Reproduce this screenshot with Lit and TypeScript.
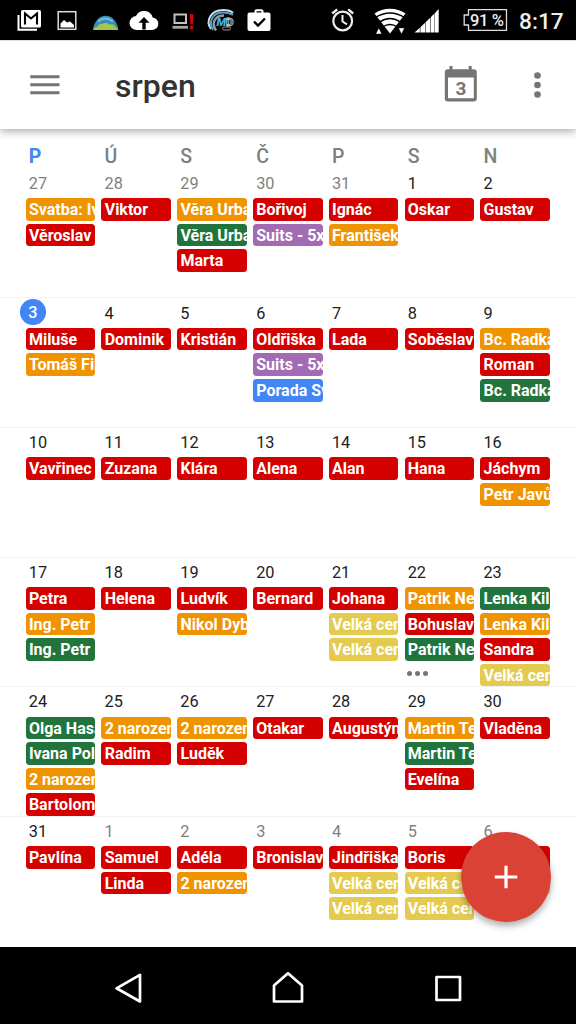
import { LitElement, html, svg, css } from "lit";
import { customElement, property } from "lit/decorators.js";
import { classMap } from "lit/directives/class-map.js";

type Tone = "r" | "o" | "g" | "p" | "b" | "y";
interface Day { n: number; out?: boolean; today?: boolean; more?: boolean; ev: [Tone, string][]; }

const d = (n: number, ...ev: [Tone, string][]): Day => ({ n, ev });
const out = (n: number, ...ev: [Tone, string][]): Day => ({ n, out: true, ev });

const WEEKS: Day[][] = [
  [
    out(27, ["o", "Svatba: Iv"], ["r", "Věroslav"]),
    out(28, ["r", "Viktor"]),
    out(29, ["o", "Věra Urba"], ["g", "Věra Urba"], ["r", "Marta"]),
    out(30, ["r", "Bořivoj"], ["p", "Suits - 5x"]),
    out(31, ["r", "Ignác"], ["o", "František"]),
    d(1, ["r", "Oskar"]),
    d(2, ["r", "Gustav"]),
  ],
  [
    { n: 3, today: true, ev: [["r", "Miluše"], ["o", "Tomáš Fil"]] },
    d(4, ["r", "Dominik"]),
    d(5, ["r", "Kristián"]),
    d(6, ["r", "Oldřiška"], ["p", "Suits - 5x"], ["b", "Porada Sv"]),
    d(7, ["r", "Lada"]),
    d(8, ["r", "Soběslav"]),
    d(9, ["o", "Bc. Radka"], ["r", "Roman"], ["g", "Bc. Radka"]),
  ],
  [
    d(10, ["r", "Vavřinec"]),
    d(11, ["r", "Zuzana"]),
    d(12, ["r", "Klára"]),
    d(13, ["r", "Alena"]),
    d(14, ["r", "Alan"]),
    d(15, ["r", "Hana"]),
    d(16, ["r", "Jáchym"], ["o", "Petr Javů"]),
  ],
  [
    d(17, ["r", "Petra"], ["o", "Ing. Petr"], ["g", "Ing. Petr"]),
    d(18, ["r", "Helena"]),
    d(19, ["r", "Ludvík"], ["o", "Nikol Dyb"]),
    d(20, ["r", "Bernard"]),
    d(21, ["r", "Johana"], ["y", "Velká cen"], ["y", "Velká cen"]),
    { n: 22, more: true, ev: [["o", "Patrik Ne"], ["r", "Bohuslav"], ["g", "Patrik Ne"]] },
    d(23, ["g", "Lenka Kil"], ["o", "Lenka Kil"], ["r", "Sandra"], ["y", "Velká cen"]),
  ],
  [
    d(24, ["g", "Olga Hasa"], ["g", "Ivana Pol"], ["o", "2 narozen"], ["r", "Bartolom"]),
    d(25, ["o", "2 narozen"], ["r", "Radim"]),
    d(26, ["o", "2 narozen"], ["r", "Luděk"]),
    d(27, ["r", "Otakar"]),
    d(28, ["r", "Augustýn"]),
    d(29, ["o", "Martin Te"], ["g", "Martin Te"], ["r", "Evelína"]),
    d(30, ["r", "Vladěna"]),
  ],
  [
    d(31, ["r", "Pavlína"]),
    out(1, ["r", "Samuel"], ["r", "Linda"]),
    out(2, ["r", "Adéla"], ["o", "2 narozen"]),
    out(3, ["r", "Bronislav"]),
    out(4, ["r", "Jindřiška"], ["y", "Velká cen"], ["y", "Velká cen"]),
    out(5, ["r", "Boris"], ["y", "Velká cen"], ["y", "Velká cen"]),
    out(6, ["r", ""], ["y", ""]),
  ],
];

@customElement("status-bar")
class StatusBar extends LitElement {
  static styles = css`
    :host { display: flex; height: 40px; background: #000; color: #fff; }
    svg { display: block; flex: none; height: 40px; }
    .clock { width: 62px; padding-left: 5px; box-sizing: border-box; font-size: 22.700px; line-height: 43px; font-weight: 500; white-space: nowrap; color: #eee; }
    text { font-family: Roboto, sans-serif; }
  `;
  render() {
    return html`
      <svg width="50" viewBox="0 0 50 40">
        <path d="M18.500 15v14.700H37" fill="none" stroke="#fff" stroke-width="2"/>
        <rect x="21" y="10" width="20" height="17.500" rx="1.500" fill="#fff"/>
        <path d="M25 24.500V13.500l6 5 6-5v11" fill="none" stroke="#000" stroke-width="2.100"/>
      </svg>
      <svg width="38" viewBox="50 0 38 40">
        <rect x="58.200" y="11.700" width="17.600" height="17.600" fill="none" stroke="#ddd" stroke-width="1.500"/>
        <path d="M60.500 27.500v-4l3.500-3.500 3 2.500 3-1 4 3.500v2.500z" fill="#fff"/>
      </svg>
      <svg width="38" viewBox="88 0 38 40">
        <path d="M93 30a12.700 15.500 0 0 1 25.300 0z" fill="#348fb8"/>
        <path d="M98 21.500q7-6 15 0" fill="none" stroke="#7cbcd4" stroke-width="2"/>
        <path d="M93.200 30q1-3.500 4-3 2-4 5-3 4-2 7 .5 5-1 6 2.500 2 0 3 3z" fill="#a8c44e"/>
      </svg>
      <svg width="40" viewBox="126 0 40 40">
        <path d="M152.700 17.500A9 9 0 0 0 136 16a7 7 0 0 0 1 14h14.500a6.200 6.200 0 0 0 1.200-12.500z" fill="#fff"/>
        <path d="M144 17l-5.500 5.800h3.800V29.500h3.400v-6.700h3.800z" fill="#000"/>
      </svg>
      <svg width="38" viewBox="166 0 38 40">
        <rect x="174.500" y="14.500" width="11.500" height="8.500" fill="none" stroke="#c5c1be" stroke-width="2"/>
        <path d="M172.500 27.300h15.500" stroke="#aaa7a5" stroke-width="2.800"/>
        <path d="M189.800 14h3.600l-.5 10h-2.600zM190 26h3.200v3.200H190z" fill="#d90000"/>
      </svg>
      <svg width="38" viewBox="204 0 38 40">
        <path d="M211 29c-6-8 0-19 12-19 5 0 8 1 10 3" fill="none" stroke="#d4dde0" stroke-width="2"/>
        <path d="M213 30c-5-9 0-17.500 10-17.500 5 0 7 .5 10 2.500" fill="none" stroke="#4ba8d0" stroke-width="2"/>
        <path d="M216 30.500c-5-8-1-15 8-15" fill="none" stroke="#999" stroke-width="2.400"/>
        <text x="216.500" y="25.500" font-size="11.500" font-weight="900" font-style="italic" fill="#42b0e6">M</text>
        <text x="226" y="25.500" font-size="11.500" font-weight="900" fill="#333" stroke="#ccc" stroke-width=".8">D</text>
        <rect x="222.500" y="27" width="8" height="3" rx="1.500" fill="none" stroke="#999"/>
      </svg>
      <svg width="78" viewBox="242 0 78 40">
        <path fill-rule="evenodd" d="M249.500 12.500h5v-1.200a2 2 0 0 1 2-2h5a2 2 0 0 1 2 2v1.200h5a2 2 0 0 1 2 2v14.500a2 2 0 0 1-2 2h-19a2 2 0 0 1-2-2V14.500a2 2 0 0 1 2-2zM256.500 12.500h5v-1.200h-5z" fill="#fff"/>
        <path d="M254 21.500l4 4 7-7" fill="none" stroke="#000" stroke-width="2.400"/>
      </svg>
      <svg width="48" viewBox="320 0 48 40">
        <circle cx="342.700" cy="21" r="9.400" fill="none" stroke="#eee" stroke-width="2.200"/>
        <path d="M342.500 15v6.500l4.500 2.800" fill="none" stroke="#eee" stroke-width="2"/>
        <path d="M332.200 13.500l5-4.200M353.200 13.500l-5-4.200" stroke="#eee" stroke-width="2.400"/>
      </svg>
      <svg width="44" viewBox="368 0 44 40">
        <path d="M390 33.500L374.500 13.500C383 7 397 7 405.500 13.500z" fill="#fff"/>
        <path d="M375 17.800q15-9.500 30 0M379 22.300q11-7.500 22 0M382.500 27q7.500-5 15 0" fill="none" stroke="#000" stroke-width="1.500"/>
        <path d="M375.800 34l3-6 3 6zM398.500 28h6l-3 6z" fill="#fff" stroke="#000" stroke-width=".4"/>
      </svg>
      <svg width="44" viewBox="412 0 44 40">
        <path d="M414.500 32.500l5.300-4.700v4.700zM420.400 27.200l4.700-4.500v9.800h-4.700zM425.600 22.200l4.900-4.700v15h-4.900zM431 16.900l3.200-3.100v18.700H431zM434.600 13.400l4.100-4.400v23.500h-4.100z" fill="#fff"/>
      </svg>
      <svg width="58" viewBox="456 0 58 40">
        <path d="M468.500 9.700H506.500V30.300H468.500V25H464.200V15H468.500z" fill="none" stroke="#ddd" stroke-width="1.300"/>
        <text x="470" y="25.700" font-size="16.500" font-weight="500" fill="#eee" textLength="34">91 %</text>
      </svg>
      <div class="clock">8:17</div>
    `;
  }
}

@customElement("month-toolbar")
class MonthToolbar extends LitElement {
  static styles = css`
    :host { display: flex; align-items: center; height: 89px; box-sizing: border-box; padding: 0 28px 0 30px; border-top: 1px solid #ddd;
      background: #fff; position: relative; z-index: 1; box-shadow: 0 2px 9px rgba(0,0,0,.36); }
    h1 { margin: 2px auto 0 55px; font-size: 32px; line-height: 40px; font-weight: 500; color: #333; }
    svg { display: block; }
    .cal { margin-right: 50px; }
    text { font-family: Roboto, sans-serif; }
  `;
  render() {
    return html`
      <svg width="30" height="20" viewBox="0 0 30 20"><path d="M.3 1.700h29.200M.3 9.700h29.200M.3 17.700h29.200" stroke="#757575" stroke-width="3"/></svg>
      <h1>srpen</h1>
      <svg class="cal" width="34" height="40" viewBox="444 64.500 34 40">
        <path fill-rule="evenodd" d="M449.500 65.500h3v3.200h16.200v-3.200h3v3.200h2.100a3 3 0 0 1 3 3V98a3 3 0 0 1-3 3h-26a3 3 0 0 1-3-3V71.700a3 3 0 0 1 3-3h1.700zM448 77v20.700h25.800V77z" fill="#757575"/>
        <text x="461" y="94.400" text-anchor="middle" font-size="19" font-weight="700" fill="#757575">3</text>
      </svg>
      <svg width="20" height="30" viewBox="0 0 20 30" fill="#757575"><circle cx="9.500" cy="5.500" r="3.300"/><circle cx="9.500" cy="15" r="3.300"/><circle cx="9.500" cy="24.500" r="3.300"/></svg>
    `;
  }
}

@customElement("day-cell")
class DayCell extends LitElement {
  @property({ attribute: false }) day!: Day;
  static styles = css`
    :host { display: flex; flex-direction: column; min-width: 0; }
    .num { height: 30.400px; box-sizing: border-box; padding: 5.200px 0 0 3.200px; font-size: 16.300px; line-height: 21px; color: #212121; }
    .out { color: #808080; }
    .today { padding: 2px 0 0; }
    .today span { display: block; width: 25.600px; height: 25.600px; margin-left: -5.600px; border-radius: 50%; background: #4285f4; color: #fff; text-align: center; line-height: 27px; font-weight: 500; }
    .list { display: flex; flex-direction: column; gap: 3px; }
    .chip { height: 22.600px; box-sizing: border-box; padding-left: 3.300px; border-radius: 3.500px; overflow: hidden; white-space: nowrap;
      color: #fff; font-size: 16px; font-weight: 700; line-height: 24.200px; }
    .r { background: #d50000; }
    .o { background: #f09300; }
    .g { background: #21753c; }
    .p { background: #a26bb3; }
    .b { background: #4285f4; }
    .y { background: #e4cb50; }
    .more { display: flex; gap: 3px; padding: 7px 0 0 2.500px; }
    .more i { width: 5px; height: 5px; border-radius: 50%; background: #757575; }
  `;
  render() {
    const { n, out, today, more, ev } = this.day;
    return html`
      <div class=${classMap({ num: true, out: !!out, today: !!today })}><span>${n}</span></div>
      <div class="list">
        ${ev.map(([tone, label]) => html`<div class="chip ${tone}">${label}</div>`)}
        ${more ? html`<div class="more"><i></i><i></i><i></i></div>` : ""}
      </div>
    `;
  }
}

@customElement("app-root")
class AppRoot extends LitElement {
  static styles = css`
    :host { display: flex; flex-direction: column; width: 576px; height: 1024px; overflow: hidden; background: #fff; position: relative; font-family: Roboto, sans-serif; }
    .status, .bar, .nav { flex: none; }
    .month { flex: 1; min-height: 0; display: flex; flex-direction: column; overflow: hidden; }
    .names, .week { display: grid; grid-template-columns: repeat(7, 69.700px); column-gap: 6.100px; padding-left: 25.600px; flex: none; }
    .names { height: 38.900px; box-sizing: border-box; padding-top: 15px; font-size: 19.500px; line-height: 25px; font-weight: 500; color: #808080; }
    .names span { padding-left: 3.200px; }
    .names .now { color: #4285f4; font-weight: 700; }
    .week { height: 129.600px; box-sizing: border-box; }
    .week + .week { box-shadow: inset 0 1px #f2f2f2; }
    .fab { position: absolute; left: 461px; top: 832px; width: 89.500px; height: 89.500px; border-radius: 50%; background: #da4236; box-shadow: 0 4px 7px rgba(0,0,0,.32); display: grid; place-items: center; }
    .nav { height: 77px; background: #000; display: flex; }
    svg { display: block; }
  `;
  render() {
    return html`
      <status-bar class="status"></status-bar>
      <month-toolbar class="bar"></month-toolbar>
      <main class="month">
        <div class="names">${["P", "Ú", "S", "Č", "P", "S", "N"].map((t, i) => html`<span class=${i ? "" : "now"}>${t}</span>`)}</div>
        ${WEEKS.map((w) => html`<div class="week">${w.map((day) => html`<day-cell .day=${day}></day-cell>`)}</div>`)}
      </main>
      <div class="fab"><svg width="24" height="24" viewBox="0 0 24 24"><path d="M12 .7v22.600M.7 12h22.600" stroke="#fff" stroke-width="3.200"/></svg></div>
      <nav class="nav">
        <svg width="576" height="77" viewBox="0 947 576 77" fill="none" stroke="#fff" stroke-width="2.700" stroke-linejoin="round">
          ${svg`<path d="M116.500 988.300L140 974.800V1001.500z"/><path d="M274 1001.500V985.500L288 973.300L302 985.500V1001.500z"/><rect x="436.500" y="977" width="23.500" height="23"/>`}
        </svg>
      </nav>
    `;
  }
}
